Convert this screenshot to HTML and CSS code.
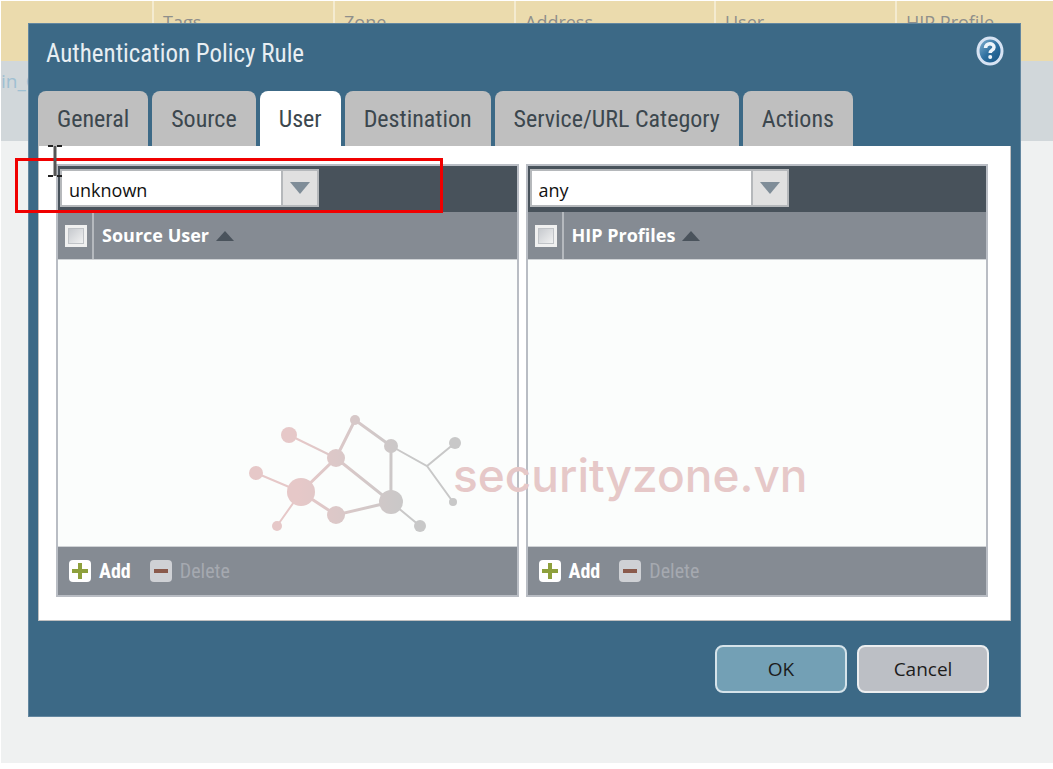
FILE: index.html
```html
<!DOCTYPE html>
<html lang="en">
<head>
    <meta charset="UTF-8">
    <meta name="viewport" content="width=device-width, initial-scale=1.0">
    <title>Authentication Policy Rule</title>
    <link rel="stylesheet" href="styles.css">
</head>
<body>
    <div class="page">
        <table class="rules">
            <colgroup>
                <col class="col-name"><col class="col-mid"><col class="col-mid"><col class="col-address"><col class="col-mid"><col>
            </colgroup>
            <thead>
                <tr>
                    <th></th>
                    <th>Tags</th>
                    <th>Zone</th>
                    <th>Address</th>
                    <th>User</th>
                    <th>HIP Profile</th>
                </tr>
            </thead>
            <tbody>
                <tr>
                    <td colspan="6">in_C</td>
                </tr>
            </tbody>
        </table>

        <div class="dialog" role="dialog" aria-labelledby="dialog-title">
            <div class="dialog-header">
                <h1 id="dialog-title">Authentication Policy Rule</h1>
                <button class="help" type="button" aria-label="Help">
                    <svg width="28" height="30" viewBox="0 0 28 30">
                        <defs>
                            <linearGradient id="help-fill" x1="0" y1="0" x2="1" y2="1">
                                <stop offset="0" stop-color="#8db9d6"/>
                                <stop offset="0.5" stop-color="#2f70a0"/>
                                <stop offset="1" stop-color="#0f4f80"/>
                            </linearGradient>
                        </defs>
                        <ellipse cx="14" cy="15" rx="12" ry="13" fill="url(#help-fill)" stroke="#d7e3f3" stroke-width="3"/>
                        <path d="M9.500 12c0-5.500 8.500-5.500 8.500-.8 0 3-3.800 3-3.800 5.800" fill="none" stroke="#eef5fb" stroke-width="3.500"/>
                        <circle cx="14.200" cy="21" r="2" fill="#eef5fb"/>
                    </svg>
                </button>
            </div>

            <div class="tabs" role="tablist">
                <button class="tab" type="button" role="tab">General</button>
                <button class="tab" type="button" role="tab">Source</button>
                <button class="tab active" type="button" role="tab" aria-selected="true">User</button>
                <button class="tab" type="button" role="tab">Destination</button>
                <button class="tab" type="button" role="tab">Service/URL Category</button>
                <button class="tab" type="button" role="tab">Actions</button>
            </div>

            <div class="panel">
                <section class="grid">
                    <div class="grid-toolbar">
                        <div class="combo">
                            <select aria-label="Source user match">
                                <option>unknown</option>
                            </select>
                            <span class="trigger"><svg width="20" height="12" viewBox="0 0 20 12"><path d="M0 0h20L10 12z" fill="#7f8d98"/></svg></span>
                        </div>
                    </div>
                    <table class="grid-head">
                        <tr>
                            <th class="check"><input type="checkbox" aria-label="Select all source users"></th>
                            <th>Source User <svg width="18" height="10" viewBox="0 0 18 10"><path d="M9 0l9 10H0z" fill="#4a535c"/></svg></th>
                        </tr>
                    </table>
                    <div class="grid-body"></div>
                    <div class="grid-footer">
                        <button class="action" type="button">
                            <svg width="22" height="22" viewBox="0 0 22 22"><rect width="22" height="22" rx="4" fill="#fff"/><path d="M11 3v16M3 11h16" stroke="#8ea03c" stroke-width="4"/></svg>
                            Add
                        </button>
                        <button class="action" type="button" disabled>
                            <svg width="22" height="22" viewBox="0 0 22 22"><rect width="22" height="22" rx="4" fill="#cfd1d5"/><path d="M4 11h14" stroke="#8a5a4c" stroke-width="4"/></svg>
                            Delete
                        </button>
                    </div>
                </section>

                <section class="grid">
                    <div class="grid-toolbar">
                        <div class="combo">
                            <select aria-label="HIP profile match">
                                <option>any</option>
                            </select>
                            <span class="trigger"><svg width="20" height="12" viewBox="0 0 20 12"><path d="M0 0h20L10 12z" fill="#7f8d98"/></svg></span>
                        </div>
                    </div>
                    <table class="grid-head">
                        <tr>
                            <th class="check"><input type="checkbox" aria-label="Select all HIP profiles"></th>
                            <th>HIP Profiles <svg width="18" height="10" viewBox="0 0 18 10"><path d="M9 0l9 10H0z" fill="#4a535c"/></svg></th>
                        </tr>
                    </table>
                    <div class="grid-body"></div>
                    <div class="grid-footer">
                        <button class="action" type="button">
                            <svg width="22" height="22" viewBox="0 0 22 22"><rect width="22" height="22" rx="4" fill="#fff"/><path d="M11 3v16M3 11h16" stroke="#8ea03c" stroke-width="4"/></svg>
                            Add
                        </button>
                        <button class="action" type="button" disabled>
                            <svg width="22" height="22" viewBox="0 0 22 22"><rect width="22" height="22" rx="4" fill="#cfd1d5"/><path d="M4 11h14" stroke="#8a5a4c" stroke-width="4"/></svg>
                            Delete
                        </button>
                    </div>
                </section>
            </div>

            <div class="dialog-footer">
                <button class="btn primary" type="button">OK</button>
                <button class="btn" type="button">Cancel</button>
            </div>
        </div>

        <!-- watermark -->
        <div class="watermark">
            <svg width="215" height="120" viewBox="0 0 215 120">
                <defs>
                    <linearGradient id="wm" gradientUnits="userSpaceOnUse" x1="50" y1="0" x2="160" y2="0">
                        <stop offset="0" stop-color="#e6c8c8"/>
                        <stop offset="1" stop-color="#c8c8c8"/>
                    </linearGradient>
                </defs>
                <g stroke="url(#wm)" stroke-width="2" fill="none">
                    <path d="M41 20L88 43M8 58L53 77L29 111M143 31L179 51L207 28M179 51L205 87M143 87L172 111"/>
                    <path stroke-width="3" d="M53 77L88 43L107 5L143 31L142.900 87L88 43M53 77L88 100L143 87"/>
                </g>
                <g fill="url(#wm)">
                    <circle cx="41" cy="20" r="8"/>
                    <circle cx="8" cy="58" r="7"/>
                    <circle cx="53" cy="77" r="14"/>
                    <circle cx="29" cy="111" r="5"/>
                    <circle cx="88" cy="43" r="9"/>
                    <circle cx="107" cy="5" r="5"/>
                    <circle cx="143" cy="31" r="7"/>
                    <circle cx="143" cy="87" r="12"/>
                    <circle cx="88" cy="100" r="9"/>
                    <circle cx="172" cy="111" r="6"/>
                    <circle cx="207" cy="28" r="6"/>
                    <circle cx="205" cy="87" r="4"/>
                </g>
            </svg>
            <span>securityzone.vn</span>
        </div>

        <div class="highlight"></div>
        <svg class="cursor" width="14" height="32" viewBox="0 0 14 32">
            <path d="M0 1h5M9 1h5M0 31h5M9 31h5" stroke="#222" stroke-width="2"/>
            <path d="M7 1v30" stroke="#555" stroke-width="3"/>
        </svg>
    </div>
</body>
</html>
```

FILE: styles.css
```css
* {
    box-sizing: border-box;
}
body {
    margin: 0;
    padding: 1px 0 0 1px;
    background: #fff;
    font-family: "Open Sans", sans-serif;
}
button, select, input {
    font: inherit;
    margin: 0;
}
svg {
    display: block;
    flex: none;
}
.page {
    position: relative;
    min-height: calc(100vh - 7px);
    background: #eff1f1;
}

/* rule list behind the dialog */
.rules {
    width: 100%;
    table-layout: fixed;
    border-collapse: collapse;
    font-size: 18px;
    line-height: 24px;
}
.col-name { width: 152px; }
.col-mid { width: 181px; }
.col-address { width: 200px; }
.rules th {
    height: 60px;
    padding: 9px;
    background: #ebdbad;
    border-right: 2px solid #f4ebd0;
    color: #8f8f8b;
    font-weight: normal;
    text-align: left;
    vertical-align: top;
}
.rules th:last-child {
    border-right: 0;
}
.rules td {
    height: 80px;
    padding: 8px 0;
    background: #d1d7da;
    color: #9fc0d2;
    font-size: 19px;
    vertical-align: top;
}

.dialog {
    position: absolute;
    top: 22px;
    left: 27px;
    right: 32px;
    padding: 0 9px 23px;
    background: #3c6986;
    border: 1px solid #6387a0;
}
.dialog-header {
    display: flex;
    justify-content: space-between;
    align-items: center;
    height: 58px;
    padding: 0 7px 4px 8px;
}
h1 {
    margin: 4px 0 0;
    color: #e8eef2;
    font-family: "Roboto Condensed", Roboto, sans-serif;
    font-size: 25px;
    font-weight: normal;
}
.help {
    padding: 0;
    background: none;
    border: 0;
}

.tabs {
    display: flex;
    gap: 4px;
    margin-top: 9px;
}
.tab {
    height: 55px;
    padding: 0 19px;
    background: #bfbfbf;
    border: 0;
    border-radius: 8px 8px 0 0;
    color: #3c474e;
    font-family: "Roboto Condensed", Roboto, sans-serif;
    font-size: 24px;
}
.tab.active {
    background: #fff;
}

.panel {
    display: flex;
    gap: 7px;
    padding: 18px 22px 23px 17px;
    background: #fff;
    border: 1px solid #c0c0c0;
    border-top: 0;
}
.grid {
    flex: 1;
    border: 2px solid #b9bdc4;
}
.grid-toolbar {
    padding: 3px 2px 5px;
    background: #48525b;
}
.combo {
    position: relative;
    width: 259px;
    height: 38px;
}
.combo select {
    width: 100%;
    height: 100%;
    padding: 4px 46px 0 7px;
    appearance: none;
    background: #fff;
    border: 2px solid #b5b8bb;
    border-radius: 0;
    color: #111;
    font-size: 18px;
}
.trigger {
    position: absolute;
    top: 0;
    right: 0;
    display: flex;
    align-items: center;
    justify-content: center;
    width: 38px;
    height: 100%;
    background: #e0e0e0;
    border: 2px solid #b5b8bb;
    pointer-events: none;
}
.grid-head {
    width: 100%;
    height: 47px;
    background: #858b93;
    border-collapse: collapse;
    color: #fff;
    font-size: 18px;
    line-height: 24px;
}
.grid-head th {
    padding: 0 8px 2px;
    text-align: left;
}
.grid-head .check {
    width: 34px;
    padding: 0;
    border-left: 2px solid #858b93;
    border-right: 2px solid #b5b9be;
}
.grid-head svg {
    display: inline-block;
    margin-left: 2px;
    vertical-align: 1px;
}
.check input {
    display: block;
    width: 22px;
    height: 22px;
    margin: 0 auto;
    appearance: none;
    background: linear-gradient(135deg, #c4c7cc, #f4f4f4);
    border: 3px solid #f0f0f0;
    outline: 1px solid #c0c3c7;
    outline-offset: -4px;
}
.grid-body {
    height: 288px;
    background: #fbfdfc;
    border-top: 1px solid #d0d3d6;
    border-bottom: 1px solid #d0d3d6;
}
.grid-footer {
    display: flex;
    gap: 19px;
    height: 48px;
    padding: 0 11px;
    background: #858b93;
}
.action {
    display: flex;
    align-items: center;
    gap: 8px;
    padding: 0;
    background: none;
    border: 0;
    color: #fff;
    font-family: "Roboto Condensed", Roboto, sans-serif;
    font-size: 20px;
    font-weight: bold;
}
.action:disabled {
    color: #a5a9b0;
    font-weight: normal;
}

.dialog-footer {
    display: flex;
    justify-content: flex-end;
    gap: 10px;
    padding: 24px 22px 0 0;
}
.btn {
    width: 132px;
    height: 48px;
    background: #bcbfc5;
    border: 2px solid #eceef0;
    border-radius: 8px;
    color: #1c1c1c;
    font-size: 19px;
}
.btn.primary {
    background: #73a0b5;
    border-color: #d5e3ea;
}

.watermark {
    position: absolute;
    top: 414px;
    left: 247px;
    display: flex;
    align-items: center;
    color: #e6c8c8;
    font-family: Inter, sans-serif;
    font-size: 46px;
    font-weight: 500;
    line-height: 56px;
    pointer-events: none;
}
.watermark svg {
    margin-right: -10px;
}
.highlight {
    position: absolute;
    top: 157px;
    left: 14px;
    width: 428px;
    height: 55px;
    border: 3px solid #f00000;
    pointer-events: none;
}
.cursor {
    position: absolute;
    top: 144px;
    left: 47px;
}
```
